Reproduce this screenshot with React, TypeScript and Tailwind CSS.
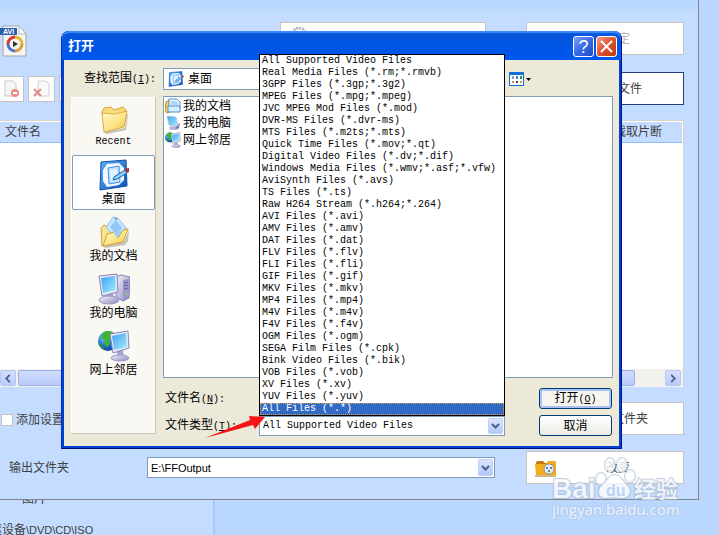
import React from 'react';

const FILE_TYPES = [
    'All Supported Video Files',
    'Real Media Files (*.rm;*.rmvb)',
    '3GPP Files (*.3gp;*.3g2)',
    'MPEG Files (*.mpg;*.mpeg)',
    'JVC MPEG Mod Files (*.mod)',
    'DVR-MS Files (*.dvr-ms)',
    'MTS Files (*.m2ts;*.mts)',
    'Quick Time Files (*.mov;*.qt)',
    'Digital Video Files (*.dv;*.dif)',
    'Windows Media Files (*.wmv;*.asf;*.vfw)',
    'AviSynth Files (*.avs)',
    'TS Files (*.ts)',
    'Raw H264 Stream (*.h264;*.264)',
    'AVI Files (*.avi)',
    'AMV Files (*.amv)',
    'DAT Files (*.dat)',
    'FLV Files (*.flv)',
    'FLI Files (*.fli)',
    'GIF Files (*.gif)',
    'MKV Files (*.mkv)',
    'MP4 Files (*.mp4)',
    'M4V Files (*.m4v)',
    'F4V Files (*.f4v)',
    'OGM Files (*.ogm)',
    'SEGA Film Files (*.cpk)',
    'Bink Video Files (*.bik)',
    'VOB Files (*.vob)',
    'XV Files (*.xv)',
    'YUV Files (*.yuv)',
    'All Files (*.*)'
];

const HIGHLIGHTED = 'All Files (*.*)';

interface IconProps {
    className?: string;
}

const Gradients: React.FC = () => (
    <svg className="absolute h-0 w-0" aria-hidden="true">
        <defs>
            <linearGradient id="folder" x1="0" y1="0" x2="1" y2="1">
                <stop offset="0" stopColor="#fffbd0" />
                <stop offset="0.6" stopColor="#fbe283" />
                <stop offset="1" stopColor="#efb83c" />
            </linearGradient>
            <linearGradient id="screen" x1="0" y1="0" x2="1" y2="1">
                <stop offset="0" stopColor="#3fa0f2" />
                <stop offset="1" stopColor="#a5eeff" />
            </linearGradient>
            <linearGradient id="metal" x1="0" y1="0" x2="1" y2="1">
                <stop offset="0" stopColor="#f4f4fc" />
                <stop offset="1" stopColor="#8b88bd" />
            </linearGradient>
            <linearGradient id="pad" x1="0" y1="0" x2="1" y2="1">
                <stop offset="0" stopColor="#5fb2f5" />
                <stop offset="1" stopColor="#0a50b4" />
            </linearGradient>
            <radialGradient id="globe" cx="0.35" cy="0.3" r="0.8">
                <stop offset="0" stopColor="#8fd0ff" />
                <stop offset="0.5" stopColor="#2277d8" />
                <stop offset="1" stopColor="#083a96" />
            </radialGradient>
        </defs>
    </svg>
);

const FolderIcon: React.FC<IconProps> = ({ className }) => (
    <svg viewBox="0 0 32 32" className={className}>
        <path d="M6 30 L27 26 L29 12 L30 13 L28 28 L8 32 Z" fill="#8d8a7c" opacity="0.5" />
        <path d="M4 10 L6 6 L13 5 L16 8 L25 5 L28 8 L28 12 L6 26 Z" fill="#f9dc78" stroke="#d3a63c" />
        <path d="M4 11 L17 12 L29 9 L26 25 L6 30 Z" fill="url(#folder)" stroke="#d9ae48" />
    </svg>
);

const DesktopIcon: React.FC<IconProps> = ({ className }) => (
    <svg viewBox="0 0 32 32" className={className}>
        <path d="M3 3 L28 1 L29 27 L2 31 Z" fill="url(#pad)" stroke="#0b4fae" />
        <path d="M9 5 L21 4 L26 9 L26 21 L21 26 L9 28 L5 22 L5 11 Z" fill="#f1f8ff" />
        <path d="M10 9 L21 7 L22 23 L11 25 Z" fill="#bfe2ff" stroke="#3d92e6" />
        <path d="M12 11 L19 10 L20 21 L13 22 Z" fill="#e3f3ff" />
        <path d="M16 18 L27 11 L29 14 L19 20 L15 21 Z" fill="#8fcdf8" stroke="#1b62b8" />
        <path d="M27 10 L31 9 L31 13 L29 14 Z" fill="#c92a1c" />
    </svg>
);

const DocumentsIcon: React.FC<IconProps> = ({ className }) => (
    <svg viewBox="0 0 32 32" className={className}>
        <path d="M5 30 L26 26 L31 14 L30 25 L27 29 L7 32 Z" fill="#8d8a7c" opacity="0.5" />
        <path d="M3 12 L6 9 L10 11 L16 13 L25 17 L24 25 L4 30 Z" fill="#fbe48f" stroke="#d0a135" />
        <path d="M8 11 L15 1 L20 2 L28 12 L19 24 Z" fill="#c9e6ff" stroke="#8fc0ee" />
        <path d="M12 11 L18 4 L24 12 L18 18 Z" fill="#8fc6f6" />
        <circle cx="18" cy="3" r="1" fill="#3f82cc" />
        <path d="M5 30 L9 18 L16 16 L20 22 L25 14 L30 13 L25 26 Z" fill="url(#folder)" stroke="#d0a135" />
        <path d="M15 16 L25 14 L19 22 Z" fill="#9bd2fb" />
    </svg>
);

const ComputerIcon: React.FC<IconProps> = ({ className }) => (
    <svg viewBox="0 0 32 32" className={className}>
        <path d="M18 4 L23 2 L32 4 L31 25 L25 28 L18 24 Z" fill="url(#metal)" stroke="#8582b4" />
        <path d="M25 7 L31 6 L31 24 L25 27 Z" fill="#9d9acb" />
        <path d="M26 10 L30 9 M26 13 L30 12 M26 16 L30 15" stroke="#5e5b99" />
        <circle cx="29" cy="21" r="1" fill="#6fe030" />
        <path d="M9 21 L15 20 L16 26 L9 26 Z" fill="#a9a7d2" />
        <ellipse cx="11" cy="27" rx="10" ry="4" fill="url(#metal)" stroke="#9a98c4" />
        <path d="M1 3 L19 1 L20 19 L4 23 Z" fill="#e9e9f6" stroke="#8885b5" />
        <path d="M3 5 L17 3 L18 17 L5 20 Z" fill="url(#screen)" />
    </svg>
);

const NetworkIcon: React.FC<IconProps> = ({ className }) => (
    <svg viewBox="0 0 32 32" className={className}>
        <circle cx="10" cy="11" r="10" fill="url(#globe)" />
        <path d="M5 3 C8 0 13 1 15 3 L12 5 L14 8 L11 10 L12 14 L9 17 L6 13 L7 10 L3 8 Z" fill="#3fb52e" />
        <path d="M1 13 L4 14 L6 18 L4 19 Z" fill="#2c9426" />
        <path d="M19 21 L25 20 L26 27 L19 27 Z" fill="#a9a7d2" />
        <ellipse cx="22" cy="28" rx="9" ry="3" fill="url(#metal)" stroke="#9a98c4" />
        <path d="M12 4 L30 1 L31 18 L15 23 Z" fill="#e9e9f6" stroke="#8885b5" />
        <path d="M14 6 L28 3 L29 17 L16 20 Z" fill="url(#screen)" />
    </svg>
);

const SmallDocumentsIcon: React.FC<IconProps> = ({ className }) => (
    <svg viewBox="0 0 16 16" className={className}>
        <path d="M1 4 L4 2 L5 14 L2 15 L0 13 Z" fill="#f6cf5c" stroke="#c38a18" />
        <path d="M4 1 H12 L15 4 V11 H4 Z" fill="#eaf5ff" stroke="#4b92dc" />
        <path d="M6 4 H12 M6 6 H13" stroke="#7cb4ea" />
        <path d="M3 8 H15 V14 H3 Z" fill="#d8ecff" stroke="#4b92dc" />
    </svg>
);

const SmallComputerIcon: React.FC<IconProps> = ({ className }) => (
    <svg viewBox="0 0 16 16" className={className}>
        <ellipse cx="9" cy="13" rx="5" ry="2" fill="#b9b8d8" />
        <path d="M12 10 L15 8 L14 13 L10 14 Z" fill="#7d7ba5" />
        <path d="M2 1 L11 2 L13 11 L4 10 Z" fill="url(#screen)" stroke="#b9c8e6" />
    </svg>
);

const AviIcon: React.FC<IconProps> = ({ className }) => (
    <svg viewBox="0 0 27 32" className={className}>
        <path d="M3 1 H19 L26 9 V31 H3 Z" fill="#f4f4f4" stroke="#a5a5a5" />
        <path d="M19 1 V9 H26 Z" fill="#ffffff" stroke="#b5b5b5" />
        <path d="M8 19 A7 7 0 0 1 15 12" fill="none" stroke="#d63a2a" strokeWidth="3" />
        <path d="M15 12 A7 7 0 0 1 22 19" fill="none" stroke="#e7b92c" strokeWidth="3" />
        <path d="M22 19 A7 7 0 0 1 15 26" fill="none" stroke="#e39a2c" strokeWidth="3" />
        <path d="M15 26 A7 7 0 0 1 8 19" fill="none" stroke="#4a6fd0" strokeWidth="3" />
        <path d="M13 16 L18 19 L13 22 Z" fill="#333333" />
        <rect x="0" y="3" width="17" height="7" fill="#2b5eac" />
        <text x="3" y="9" fontSize="7" fontWeight="bold" fontFamily="Liberation Sans, sans-serif" fill="#ffffff">AVI</text>
    </svg>
);

const ChevronDown: React.FC = () => (
    <span className="pointer-events-none absolute inset-y-[2px] right-[2px] flex w-[15px] items-center justify-center rounded-xs border border-[#c3d0f8] bg-linear-to-b from-[#dbe5ff] to-[#b3c8fb]">
        <svg viewBox="0 0 9 6" className="h-[6px] w-[9px]">
            <path d="M1 1 L4.5 4.5 L8 1" fill="none" stroke="#4d6185" strokeWidth="2" />
        </svg>
    </span>
);

const Mnemonic: React.FC<{ letter: string; colon?: boolean }> = ({ letter, colon }) => (
    <span className="font-['Liberation_Mono',monospace] text-[10px]">
        (<u>{letter}</u>){colon && ':'}
    </span>
);

const ToolButton: React.FC<{ label?: string; disabled?: boolean; active?: boolean; icon?: React.ReactNode }> = ({
    label,
    disabled,
    active,
    icon
}) => (
    <button
        disabled={disabled}
        className={`relative flex h-[33px] w-[158px] shrink-0 items-center justify-center border bg-white pl-[26px]
            ${active ? 'border-[#204078]' : 'border-[#c6c3bf]'}
            ${disabled ? 'text-[#b4b4b4]' : 'text-[#404040]'}
        `}
    >
        {icon && <span className="absolute left-2 top-2">{icon}</span>}
        {label}
    </button>
);

const SmallFileButton: React.FC<{ label: string; children?: React.ReactNode }> = ({ label, children }) => (
    <button aria-label={label} className="flex h-[26px] w-[27px] items-center justify-center border border-[#c6c3bf] bg-white">
        <svg viewBox="0 0 18 18" className="h-[18px] w-[18px]">{children}</svg>
    </button>
);

const MainWindow: React.FC = () => (
    <div className="mr-5 border-r border-b border-[#848484] bg-[#c3dcff] pb-[15px] text-[#404040]">
        <div className="h-[9px] bg-[#b9d8ff]" />

        <div className="mt-[13px] flex h-[33px] items-start pr-[14px]">
            <AviIcon className="mt-[3px] h-8 w-[27px]" />
            <button aria-label="选项" className="ml-auto mr-10 flex h-[33px] w-[206px] items-start border border-[#c6c3bf] bg-white pl-2 pt-1">
                <svg viewBox="0 0 20 20" className="h-5 w-5">
                    <circle cx="10" cy="8" r="7" fill="none" stroke="#b5b5b5" strokeWidth="3" strokeDasharray="2 1" />
                </svg>
            </button>
            <ToolButton
                label="确定"
                disabled
                icon={
                    <svg viewBox="0 0 20 20" className="ml-1 h-4 w-5">
                        <path d="M8 -4 L15 4 L10 4 L10 10 L5 10 L5 4 L1 4 Z" fill="#f5b9ad" />
                    </svg>
                }
            />
        </div>

        <div className="mt-[17px] flex items-center pr-[14px]">
            <div className="-ml-[3px] flex gap-1">
                <SmallFileButton label="移除">
                    <path d="M3 1 H11 L14 4 V16 H3 Z" fill="#f5f5f5" stroke="#c8c8c8" />
                    <circle cx="13" cy="13" r="4" fill="#ec8d85" />
                    <path d="M11 13 H15" stroke="#ffffff" strokeWidth="2" />
                </SmallFileButton>
                <SmallFileButton label="清空列表">
                    <path d="M5 1 H13 L16 4 V16 H5 Z" fill="#f9f9f9" stroke="#cfcfcf" />
                    <path d="M1 9 L8 16 M8 9 L1 16" stroke="#e78b82" strokeWidth="2" />
                </SmallFileButton>
                <SmallFileButton label="属性" />
            </div>
            <div className="ml-auto">
                <ToolButton label="添加文件" active />
            </div>
        </div>

        <div className="mr-[14px] mt-[15px] flex h-[267px] flex-col border-t border-r border-[#d5d3cc] bg-white">
            <table className="mr-px mt-px border-collapse text-left">
                <thead>
                    <tr className="h-5 border-b border-[#94bdf8] bg-[#c3dcff]">
                        <th className="pl-[5px] font-normal">文件名</th>
                        <th className="w-[68px] font-normal">截取片断</th>
                    </tr>
                </thead>
            </table>
            <div className="mt-auto flex h-[18px] items-center gap-[2px] bg-[#f3f1ec] pr-[2px]">
                <button aria-label="向左" className="flex h-4 w-4 items-center justify-center rounded-xs border border-[#b5c7f5] bg-linear-to-b from-[#d5e0ff] to-[#b9cbf9]">
                    <svg viewBox="0 0 8 10" className="h-[9px] w-[8px]">
                        <path d="M6 1 L2 5 L6 9" fill="none" stroke="#4d6185" strokeWidth="2" />
                    </svg>
                </button>
                <div className="h-4 flex-1 rounded-xs border border-[#98b0ea] bg-linear-to-b from-[#d0dcff] to-[#b9cbf9]" />
                <div className="w-[26px]" />
                <button aria-label="向右" className="flex h-4 w-4 items-center justify-center rounded-xs border border-[#b5c7f5] bg-linear-to-b from-[#d5e0ff] to-[#b9cbf9]">
                    <svg viewBox="0 0 8 10" className="h-[9px] w-[8px]">
                        <path d="M2 1 L6 5 L2 9" fill="none" stroke="#4d6185" strokeWidth="2" />
                    </svg>
                </button>
            </div>
        </div>

        <div className="mt-[15px] flex items-center justify-between pr-[14px]">
            <label className="flex items-center gap-[3px] pl-px pt-[2px]">
                <input type="checkbox" className="h-3 w-3 appearance-none border border-[#c6c3bf] bg-white" />
                添加设置
            </label>
            <ToolButton label="添加文件夹" />
        </div>

        <div className="mt-4 flex items-center pr-[14px]">
            <label htmlFor="output" className="w-[147px] pl-[9px]">输出文件夹</label>
            <div className="relative mr-[31px] flex-1">
                <select
                    id="output"
                    className="h-[21px] w-full appearance-none border border-[#7f9db9] bg-white px-[3px] font-['Liberation_Sans','Noto_Sans_CJK_SC',sans-serif] text-[11px] text-black"
                >
                    <option>E:\FFOutput</option>
                </select>
                <ChevronDown />
            </div>
            <ToolButton
                label="改变"
                icon={
                    <svg viewBox="0 0 22 17" className="h-[17px] w-[22px]">
                        <path d="M1 3 Q1 1 3 1 H8 L10 3 H19 V6 H1 Z" fill="#c9780e" />
                        <path d="M0 4 H11 L13 1 H20 Q21 1 21 3 V15 H1 Z" fill="#f3ac1d" />
                        <path d="M0 16 H21" stroke="#a6700f" />
                        <circle cx="14" cy="9" r="5" fill="#e8eef4" stroke="#8193a6" />
                        <circle cx="12" cy="8" r="1" fill="#44566b" />
                        <circle cx="16" cy="8" r="1" fill="#44566b" />
                        <circle cx="14" cy="11" r="1" fill="#44566b" />
                    </svg>
                }
            />
        </div>
    </div>
);

const PLACES = [
    { label: 'Recent', Icon: FolderIcon },
    { label: '桌面', Icon: DesktopIcon, selected: true },
    { label: '我的文档', Icon: DocumentsIcon },
    { label: '我的电脑', Icon: ComputerIcon },
    { label: '网上邻居', Icon: NetworkIcon }
];

const DESKTOP_FILES = [
    { label: '我的文档', Icon: SmallDocumentsIcon },
    { label: '我的电脑', Icon: SmallComputerIcon },
    { label: '网上邻居', Icon: NetworkIcon }
];

const PlacesBar: React.FC = () => (
    <nav className="mt-px mb-[2px] flex w-[85px] shrink-0 flex-col gap-[2px] border border-t-white border-l-white border-r-[#c9c7ba] border-b-[#c9c7ba] bg-[#f9f8f3]">
        {PLACES.map(({ label, Icon, selected }) => (
            <button
                key={label}
                className={`flex h-[55px] flex-col items-center rounded-xs border pt-[3px]
                    ${selected ? 'border-[#7f9db9] bg-white' : 'border-transparent'}
                `}
            >
                <Icon className="h-8 w-8" />
                {label === 'Recent' ? (
                    <span className="font-['Liberation_Mono',monospace] text-[10px] leading-4">{label}</span>
                ) : (
                    <span className="leading-4">{label}</span>
                )}
            </button>
        ))}
    </nav>
);

const FileTypeList: React.FC = () => (
    <ul role="listbox" aria-label="文件类型" className="absolute bottom-full left-0 right-0 z-10 border border-black bg-white">
        {FILE_TYPES.map(type => (
            <li
                key={type}
                role="option"
                aria-selected={type === HIGHLIGHTED}
                className={`h-3 whitespace-nowrap pl-[2px] leading-3
                    ${type === HIGHLIGHTED ? 'bg-[#316ac5] text-white outline-1 -outline-offset-1 outline-dotted outline-[#e0a050]' : ''}
                `}
            >
                {type}
            </li>
        ))}
    </ul>
);

const OpenDialog: React.FC = () => (
    <div role="dialog" aria-label="打开" className="absolute left-[61px] right-[97px] top-[31px] rounded-t-lg border-x border-b border-l-[#0a2fd0] border-r-[#00138c] border-b-[#00138c] bg-[#0040d0] text-black">
        <header className="flex h-[29px] items-center gap-[2px] rounded-t-[7px] bg-linear-to-b from-[#0a56d8] via-[#0055e5] to-[#0058f0] pl-[6px] pr-1 shadow-[inset_0_2px_1px_#3c8cf8]">
            <h1 className="mr-auto text-[13px] font-bold text-white">打开</h1>
            <button aria-label="帮助" className="mt-[2px] flex h-[21px] w-[21px] items-center justify-center rounded-[3px] border border-white bg-linear-to-br from-[#7ba0f4] via-[#3a6be6] to-[#1c48c8] font-['Liberation_Sans',sans-serif] text-[18px] leading-none text-white">
                ?
            </button>
            <button aria-label="关闭" className="mt-[2px] flex h-[21px] w-[21px] items-center justify-center rounded-[3px] border border-white bg-linear-to-br from-[#f09a7c] via-[#e0502c] to-[#c03810]">
                <svg viewBox="0 0 13 13" className="h-[13px] w-[13px]">
                    <path d="M1 1 L12 12 M12 1 L1 12" stroke="#ffffff" strokeWidth="2" />
                </svg>
            </button>
        </header>

        <div className="mx-[2px] mb-[2px] bg-[#ece9d8] pb-[10px] pl-[7px] pr-[6px] pt-2">
            <div className="flex items-center">
                <label htmlFor="look-in" className="w-[92px] pl-[13px]">
                    查找范围<Mnemonic letter="I" colon />
                </label>
                <div className="relative flex-1">
                    <select id="look-in" className="h-[22px] w-full appearance-none border border-[#7f9db9] bg-white pl-6">
                        <option>桌面</option>
                    </select>
                    <DesktopIcon className="absolute left-[5px] top-[3px] h-4 w-4" />
                    <ChevronDown />
                </div>
                <button aria-label="查看菜单" className="flex w-[108px] items-center gap-[2px] pl-1">
                    <svg viewBox="0 0 15 14" className="h-[14px] w-[15px]">
                        <rect x="0" y="0" width="15" height="14" fill="#1270d4" />
                        <rect x="1" y="3" width="13" height="10" fill="#ffffff" />
                        <rect x="3" y="4" width="2" height="3" fill="#9a97bb" />
                        <rect x="7" y="4" width="2" height="3" fill="#2d86dd" />
                        <rect x="11" y="4" width="2" height="3" fill="#1f9c2c" />
                        <rect x="3" y="9" width="2" height="2" fill="#f2795a" />
                        <rect x="7" y="9" width="2" height="2" fill="#1b3c9c" />
                        <rect x="11" y="9" width="2" height="2" fill="#d0a11c" />
                    </svg>
                    <svg viewBox="0 0 5 3" className="h-[3px] w-[5px]">
                        <path d="M0 0 H5 L2.5 3 Z" fill="#000000" />
                    </svg>
                </button>
            </div>

            <div className="mt-[6px] flex gap-[7px]">
                <PlacesBar />
                <div className="flex flex-1 flex-col">
                    <ul className="h-[282px] border border-[#7f9db9] bg-white pl-px">
                        {DESKTOP_FILES.map(({ label, Icon }) => (
                            <li key={label} className="flex h-[17px] items-center gap-[2px] leading-4">
                                <Icon className="h-4 w-4" />
                                {label}
                            </li>
                        ))}
                    </ul>

                    <div className="mt-[10px] flex items-center pr-px">
                        <label htmlFor="file-name" className="w-24 pl-[2px]">
                            文件名<Mnemonic letter="N" colon />
                        </label>
                        <input id="file-name" className="h-[21px] min-w-0 flex-1 border border-[#7f9db9] bg-white px-[3px]" />
                        <button className="ml-[34px] h-[21px] w-[73px] rounded-[3px] border border-[#003c74] bg-[#f6f5f0] leading-none shadow-[inset_0_0_0_2px_#a9c1f5]">
                            打开<Mnemonic letter="O" />
                        </button>
                    </div>

                    <div className="mt-[6px] flex items-center pr-px">
                        <label htmlFor="file-type" className="w-24 pl-[2px]">
                            文件类型<Mnemonic letter="T" colon />
                        </label>
                        <div className="relative flex-1 font-['Liberation_Mono',monospace] text-[10px]">
                            <select id="file-type" className="block h-[20px] w-full appearance-none border border-[#7f9db9] bg-white px-[3px]">
                                <option>All Supported Video Files</option>
                            </select>
                            <ChevronDown />
                            <FileTypeList />
                        </div>
                        <button className="ml-[34px] h-[21px] w-[73px] rounded-[3px] border border-[#003c74] bg-linear-to-b from-white to-[#ecebe5] leading-none">
                            取消
                        </button>
                    </div>
                </div>
            </div>
        </div>
    </div>
);

const Watermark: React.FC = () => (
    <svg viewBox="0 0 132 64" className="pointer-events-none absolute left-[550px] top-[456px] h-16 w-[132px]">
        <g fill="#ffffff" fillOpacity="0.8" stroke="#9fb2cc" strokeOpacity="0.6" strokeWidth="2" paintOrder="stroke">
            <text x="2" y="42" fontSize="28" fontWeight="bold" fontFamily="Liberation Sans, sans-serif">Bai</text>
            <ellipse cx="51" cy="23" rx="5" ry="6" />
            <ellipse cx="60" cy="9" rx="5" ry="7" />
            <ellipse cx="72" cy="9" rx="5" ry="7" />
            <ellipse cx="80" cy="20" rx="5" ry="6" />
            <path d="M65 19 C71 19 72 25 77 29 C83 35 79 43 71 42 C66 41 62 41 57 42 C49 43 46 35 52 29 C57 25 59 19 65 19 Z" />
            <text x="84" y="41" fontSize="22" fontWeight="bold" fontFamily="Noto Sans CJK SC, sans-serif">经验</text>
            <text x="2" y="59" fontSize="15" strokeOpacity="0.3" fontFamily="Open Sans, Noto Sans, sans-serif">jingyan.baidu.com</text>
        </g>
        <text x="56" y="40" fontSize="16" fontWeight="bold" fontFamily="Liberation Sans, sans-serif" fill="#b9d2f5">du</text>
    </svg>
);

export default function App() {
    return (
        <div className="relative flex h-screen flex-col overflow-hidden bg-[#bad7ff] font-['Liberation_Sans','Noto_Sans_CJK_SC',sans-serif] text-[12px] leading-4">
            <Gradients />
            <MainWindow />

            <div className="w-[215px] flex-1 overflow-hidden border-r-2 border-[#a3c8fd] bg-[#c3dcff] text-[#404040]">
                <p className="-mt-[9px] pl-[22px]">图片</p>
                <p className="-ml-[22px] mt-[15px] whitespace-nowrap">
                    光驱设备<span className="text-[11px]">\DVD\CD\ISO</span>
                </p>
            </div>

            <OpenDialog />

            <svg viewBox="0 0 62 24" className="pointer-events-none absolute left-[204px] top-[415px] z-20 h-6 w-[62px]">
                <path d="M1 23 L46 5 L45 1 L61 2 L51 14 L49 10 Z" fill="#f81414" />
            </svg>

            <Watermark />
        </div>
    );
}
